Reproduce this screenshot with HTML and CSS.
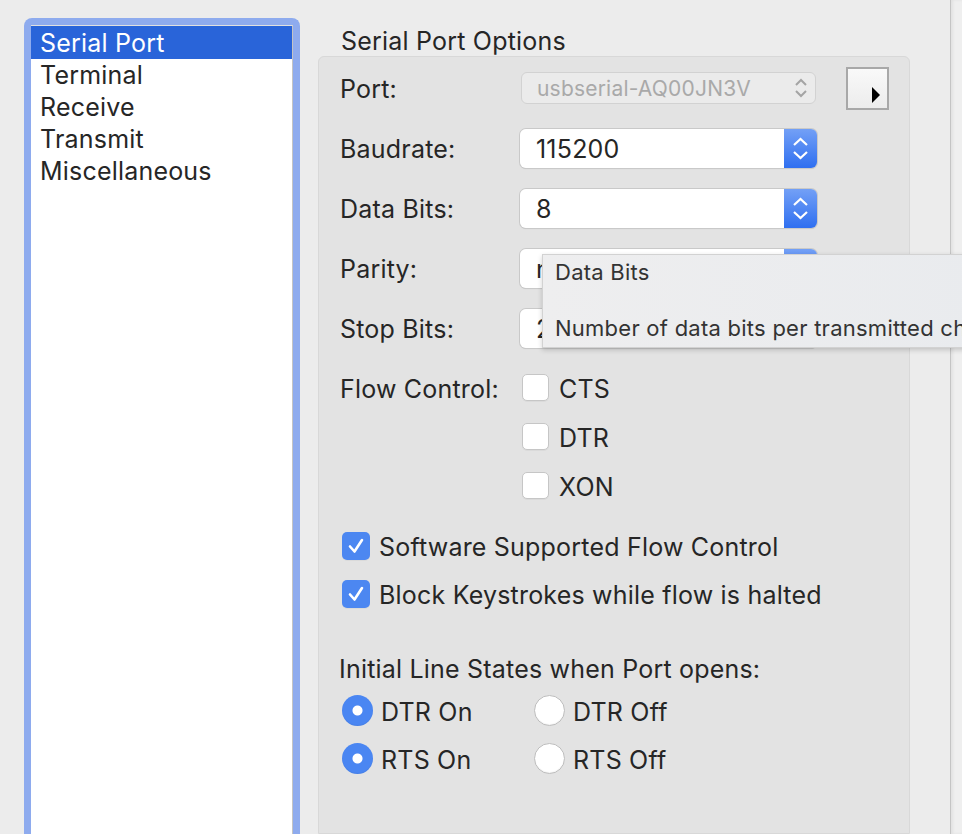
FILE: index.html
```html
<!DOCTYPE html>
<html>
<head>
<meta charset="utf-8">
<link rel="stylesheet" href="styles.css">
</head>
<body>
<div class="app">
  <div class="content">
    <div class="sidebar">
      <ul class="list">
        <li class="item selected">Serial Port</li>
        <li class="item">Terminal</li>
        <li class="item">Receive</li>
        <li class="item">Transmit</li>
        <li class="item">Miscellaneous</li>
      </ul>
    </div>
    <div class="options">
      <div class="title">Serial Port Options</div>
      <div class="group">
        <div class="row">
          <div class="label">Port:</div>
          <div class="popup disabled">
            <span class="value">usbserial-AQ00JN3V</span>
            <svg class="popup-arrows" width="14" height="20" viewBox="0 0 14 20"><polyline points="2,7 7,2 12,7" fill="none" stroke="#a4a4a4" stroke-width="2"/><polyline points="2,13 7,18 12,13" fill="none" stroke="#a4a4a4" stroke-width="2"/></svg>
          </div>
          <div class="disclosure">
            <svg width="10" height="16" viewBox="0 0 10 16"><polygon points="1,0 9,8 1,16" fill="#000"/></svg>
          </div>
        </div>
        <div class="row">
          <div class="label">Baudrate:</div>
          <div class="combo"><span class="combo-field">115200</span><span class="stepper"><svg width="33" height="39" viewBox="0 0 33 39"><polyline points="10,16 16.5,10 23,16" fill="none" stroke="#fff" stroke-width="2.2"/><polyline points="10,23 16.5,29 23,23" fill="none" stroke="#fff" stroke-width="2.2"/></svg></span></div>
        </div>
        <div class="row">
          <div class="label">Data Bits:</div>
          <div class="combo"><span class="combo-field">8</span><span class="stepper"><svg width="33" height="39" viewBox="0 0 33 39"><polyline points="10,16 16.5,10 23,16" fill="none" stroke="#fff" stroke-width="2.2"/><polyline points="10,23 16.5,29 23,23" fill="none" stroke="#fff" stroke-width="2.2"/></svg></span></div>
        </div>
        <div class="row">
          <div class="label">Parity:</div>
          <div class="combo"><span class="combo-field">none</span><span class="stepper"><svg width="33" height="39" viewBox="0 0 33 39"><polyline points="10,16 16.5,10 23,16" fill="none" stroke="#fff" stroke-width="2.2"/><polyline points="10,23 16.5,29 23,23" fill="none" stroke="#fff" stroke-width="2.2"/></svg></span></div>
        </div>
        <div class="row">
          <div class="label">Stop Bits:</div>
          <div class="combo"><span class="combo-field">2</span><span class="stepper"><svg width="33" height="39" viewBox="0 0 33 39"><polyline points="10,16 16.5,10 23,16" fill="none" stroke="#fff" stroke-width="2.2"/><polyline points="10,23 16.5,29 23,23" fill="none" stroke="#fff" stroke-width="2.2"/></svg></span></div>
        </div>
        <div class="flow">
          <div class="label flow-label">Flow Control:</div>
          <div class="flow-items">
            <div class="check-line"><span class="box"></span><span>CTS</span></div>
            <div class="check-line"><span class="box"></span><span>DTR</span></div>
            <div class="check-line"><span class="box"></span><span>XON</span></div>
          </div>
        </div>
        <div class="checks">
          <div class="check-line wide"><span class="box checked"><svg width="28" height="28" viewBox="0 0 28 28"><polyline points="8,14.5 12.5,19.5 20,8" fill="none" stroke="#fff" stroke-width="2.6" stroke-linecap="round" stroke-linejoin="round"/></svg></span><span>Software Supported Flow Control</span></div>
          <div class="check-line wide"><span class="box checked"><svg width="28" height="28" viewBox="0 0 28 28"><polyline points="8,14.5 12.5,19.5 20,8" fill="none" stroke="#fff" stroke-width="2.6" stroke-linecap="round" stroke-linejoin="round"/></svg></span><span>Block Keystrokes while flow is halted</span></div>
        </div>
        <div class="heading">Initial Line States when Port opens:</div>
        <div class="radios">
          <div class="radio-line"><span class="radio on"></span><span>DTR On</span></div>
          <div class="radio-line"><span class="radio"></span><span>DTR Off</span></div>
          <div class="radio-line"><span class="radio on"></span><span>RTS On</span></div>
          <div class="radio-line"><span class="radio"></span><span>RTS Off</span></div>
        </div>
      </div>
    </div>
  </div>
  <div class="edge"></div>
</div>
<div class="tooltip">
  <div class="tip-title">Data Bits</div>
  <div class="tip-text">Number of data bits per transmitted character</div>
</div>
</body>
</html>
```

FILE: styles.css
```css
html, body {
  margin: 0;
  padding: 0;
}
body {
  width: 962px;
  height: 834px;
  overflow: hidden;
  background: #ececec;
  font-family: Inter, "Liberation Sans", sans-serif;
  font-size: 25px;
  letter-spacing: 0.2px;
  color: #262626;
  position: relative;
}
.app {
  display: flex;
  height: 834px;
}
.content {
  flex: 0 0 950px;
  display: flex;
  padding: 18px 0 0 24px;
  box-sizing: border-box;
}
.edge {
  flex: 1;
  border-left: 1px solid #c4c4c4;
  background: #efefef;
  box-shadow: inset 2px 0 3px rgba(0,0,0,0.06);
}
.sidebar {
  width: 276px;
  height: 830px;
  box-sizing: border-box;
  border: 7px solid #8eabee;
  border-bottom: none;
  border-radius: 8px 8px 0 0;
  background: #fff;
}
.list {
  list-style: none;
  margin: 0;
  padding: 0;
  height: 100%;
  border-right: 1px solid #c4c4c4;
  border-top: 1px solid #e0e0e0;
  box-sizing: border-box;
  background: #fff;
}
.item {
  height: 32px;
  line-height: 32px;
  padding-left: 9px;
}
.item.selected {
  height: 33px;
  line-height: 34px;
  background: #2964d9;
  color: #fff;
}
.options {
  width: 592px;
  margin-left: 18px;
  padding-top: 7px;
  display: flex;
  flex-direction: column;
}
.title {
  height: 31px;
  line-height: 33px;
  padding-left: 23px;
}
.group {
  flex: 1;
  background: #e3e3e3;
  border: 1px solid #d8d8d8;
  border-radius: 6px 6px 0 0;
  padding: 1px 0 0 21px;
}
.row {
  display: flex;
  align-items: center;
  height: 60px;
}
.label {
  width: 180px;
  flex: 0 0 180px;
  line-height: 32px;
  padding-top: 2px;
}
.popup {
  width: 295px;
  height: 32px;
  margin-left: 1px;
  box-sizing: border-box;
  border: 1px solid #d2d2d2;
  border-radius: 6px;
  background: #ebebeb;
  display: flex;
  align-items: center;
  justify-content: space-between;
  padding: 0 7px 0 15px;
  font-size: 21px;
  color: #a9a9a9;
}
.disclosure {
  width: 43px;
  height: 43px;
  box-sizing: border-box;
  margin-left: 30px;
  border: 2px solid #a8a8a8;
  background: linear-gradient(#f9f9f9, #ececec);
  display: flex;
  justify-content: flex-end;
  align-items: flex-end;
  padding: 0 6px 5px 0;
}
.combo {
  width: 297px;
  height: 39px;
  display: flex;
  border-radius: 6px;
  box-shadow: 0 0 0 1px #c9c9c9, 0 1px 1px rgba(0,0,0,0.15);
  overflow: hidden;
}
.combo-field {
  flex: 1;
  background: #fff;
  padding-left: 16px;
  line-height: 40px;
}
.stepper {
  width: 33px;
  background: linear-gradient(#73a0f6, #2f6ff0);
  display: flex;
}
.flow {
  display: flex;
  margin-top: 5px;
}
.flow-label {
  height: 49px;
  line-height: 49px;
  padding-top: 2px;
}
.check-line {
  height: 49px;
  display: flex;
  align-items: center;
  gap: 10px;
  padding-left: 2px;
}
.check-line span:last-child {
  padding-top: 2px;
}
.box {
  width: 27px;
  height: 27px;
  box-sizing: border-box;
  border: 1px solid #c6c6c6;
  border-radius: 5px;
  background: #fff;
  box-shadow: 0 1px 0 rgba(0,0,0,0.04);
  display: flex;
}
.checks {
  margin-top: 12px;
}
.check-line.wide {
  height: 48px;
  gap: 9px;
}
.box.checked {
  width: 28px;
  height: 28px;
  border: none;
  background: #4c87f1;
}
.heading {
  margin-top: 34px;
  height: 32px;
  line-height: 32px;
  padding-top: 1px;
  box-sizing: border-box;
  margin-left: -1px;
}
.radios {
  margin-top: 2px;
  display: grid;
  grid-template-columns: 192px 200px;
}
.radio-line {
  height: 48px;
  display: flex;
  align-items: center;
  gap: 8px;
  padding-left: 2px;
}
.radio-line span:last-child {
  padding-top: 3px;
}
.radio {
  width: 31px;
  height: 31px;
  box-sizing: border-box;
  border-radius: 50%;
  border: 1px solid #bdbdbd;
  background: #fff;
  box-shadow: inset 0 -1px 1px rgba(0,0,0,0.05);
}
.radio.on {
  border: none;
  background: radial-gradient(circle, #fff 0 4.5px, #4a86f2 5.5px);
}
.tooltip {
  position: absolute;
  left: 542px;
  top: 254px;
  width: 440px;
  height: 94px;
  box-sizing: border-box;
  background: linear-gradient(90deg, #eeeeef, #e9ebee);
  border: 1px solid #d2d2d2;
  box-shadow: 0 2px 5px rgba(0,0,0,0.18);
  padding-left: 12px;
  font-size: 22px;
  letter-spacing: 0.25px;
  color: #333;
  white-space: nowrap;
}
.tip-title {
  margin-top: 2px;
  line-height: 30px;
}
.tip-text {
  margin-top: 26px;
  line-height: 30px;
}
```
